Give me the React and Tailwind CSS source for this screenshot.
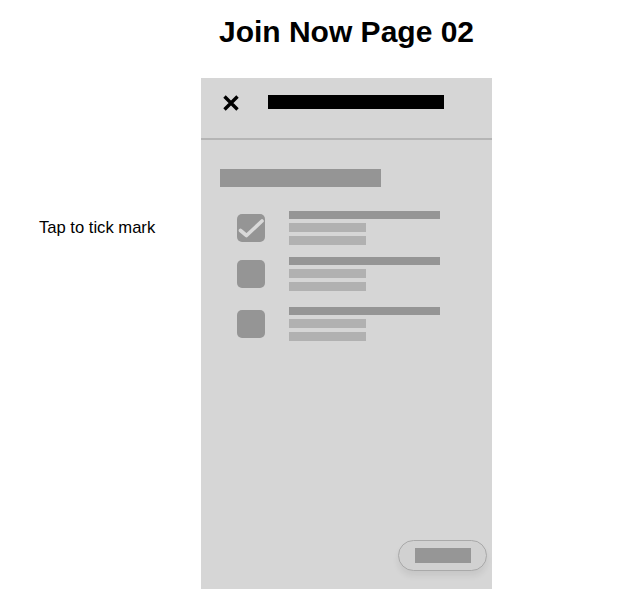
import React from 'react';

const ListRow = ({ checked, className }) => (
    <div className={`flex items-center ${className}`}>
        <div className="ml-[36px] w-[28px] h-[28px] rounded-[5px] bg-[#959595] flex items-center justify-center">
            {checked && (
                <svg width="28" height="28" viewBox="0 0 28 28">
                    <path d="M3.5 16.5 L9.5 21.5 L25 7" fill="none" stroke="#d9d9d9" strokeWidth="3.6" strokeLinecap="round" strokeLinejoin="round" />
                </svg>
            )}
        </div>
        <div className="ml-[24px] flex flex-col">
            <div className="w-[151px] h-[8px] bg-[#959595]" />
            <div className="mt-[4px] w-[77px] h-[9px] bg-[#b1b1b1]" />
            <div className="mt-[4px] w-[77px] h-[9px] bg-[#b1b1b1]" />
        </div>
    </div>
);

const App = () => {
    return (
        <div className="w-[633px] h-[609px] bg-white flex font-['Liberation_Sans',Arial,sans-serif] text-black">
            {/* Side note */}
            <div className="w-[201px] pt-[218px] pl-[39px] text-[16.6px] leading-[20px]">
                Tap to tick mark
            </div>

            <div className="w-[291px] flex flex-col">
                <h1 className="mt-[14px] mb-[28px] text-[30px] leading-[36px] font-bold text-center">
                    Join Now Page 02
                </h1>

                {/* Phone screen */}
                <div className="h-[511px] bg-[#d6d6d6] flex flex-col">
                    <div className="h-[62px] border-b-2 border-[#b5b5b5] flex items-start pt-[16px] pl-[21px]">
                        <svg width="18" height="18" viewBox="0 0 18 18">
                            <path d="M2.5 2.5 L15.5 15.5 M15.5 2.5 L2.5 15.5" stroke="#000" strokeWidth="3.4" />
                        </svg>
                        <div className="ml-[28px] mt-[1px] w-[176px] h-[14px] bg-black" />
                    </div>

                    <div className="mt-[29px] ml-[19px] w-[161px] h-[18px] bg-[#959595]" />

                    <ListRow checked className="mt-[24px]" />
                    <ListRow className="mt-[12px]" />
                    <ListRow className="mt-[16px]" />

                    <button className="mt-auto mb-[18px] mr-[5px] self-end w-[89px] h-[31px] rounded-full border border-[#a9a9a9] bg-[#d1d1d1] shadow-[0_5px_6px_rgba(0,0,0,0.07)] flex items-center justify-center">
                        <div className="w-[56px] h-[15px] bg-[#969696]" />
                    </button>
                </div>
            </div>
        </div>
    );
};

export default App;
